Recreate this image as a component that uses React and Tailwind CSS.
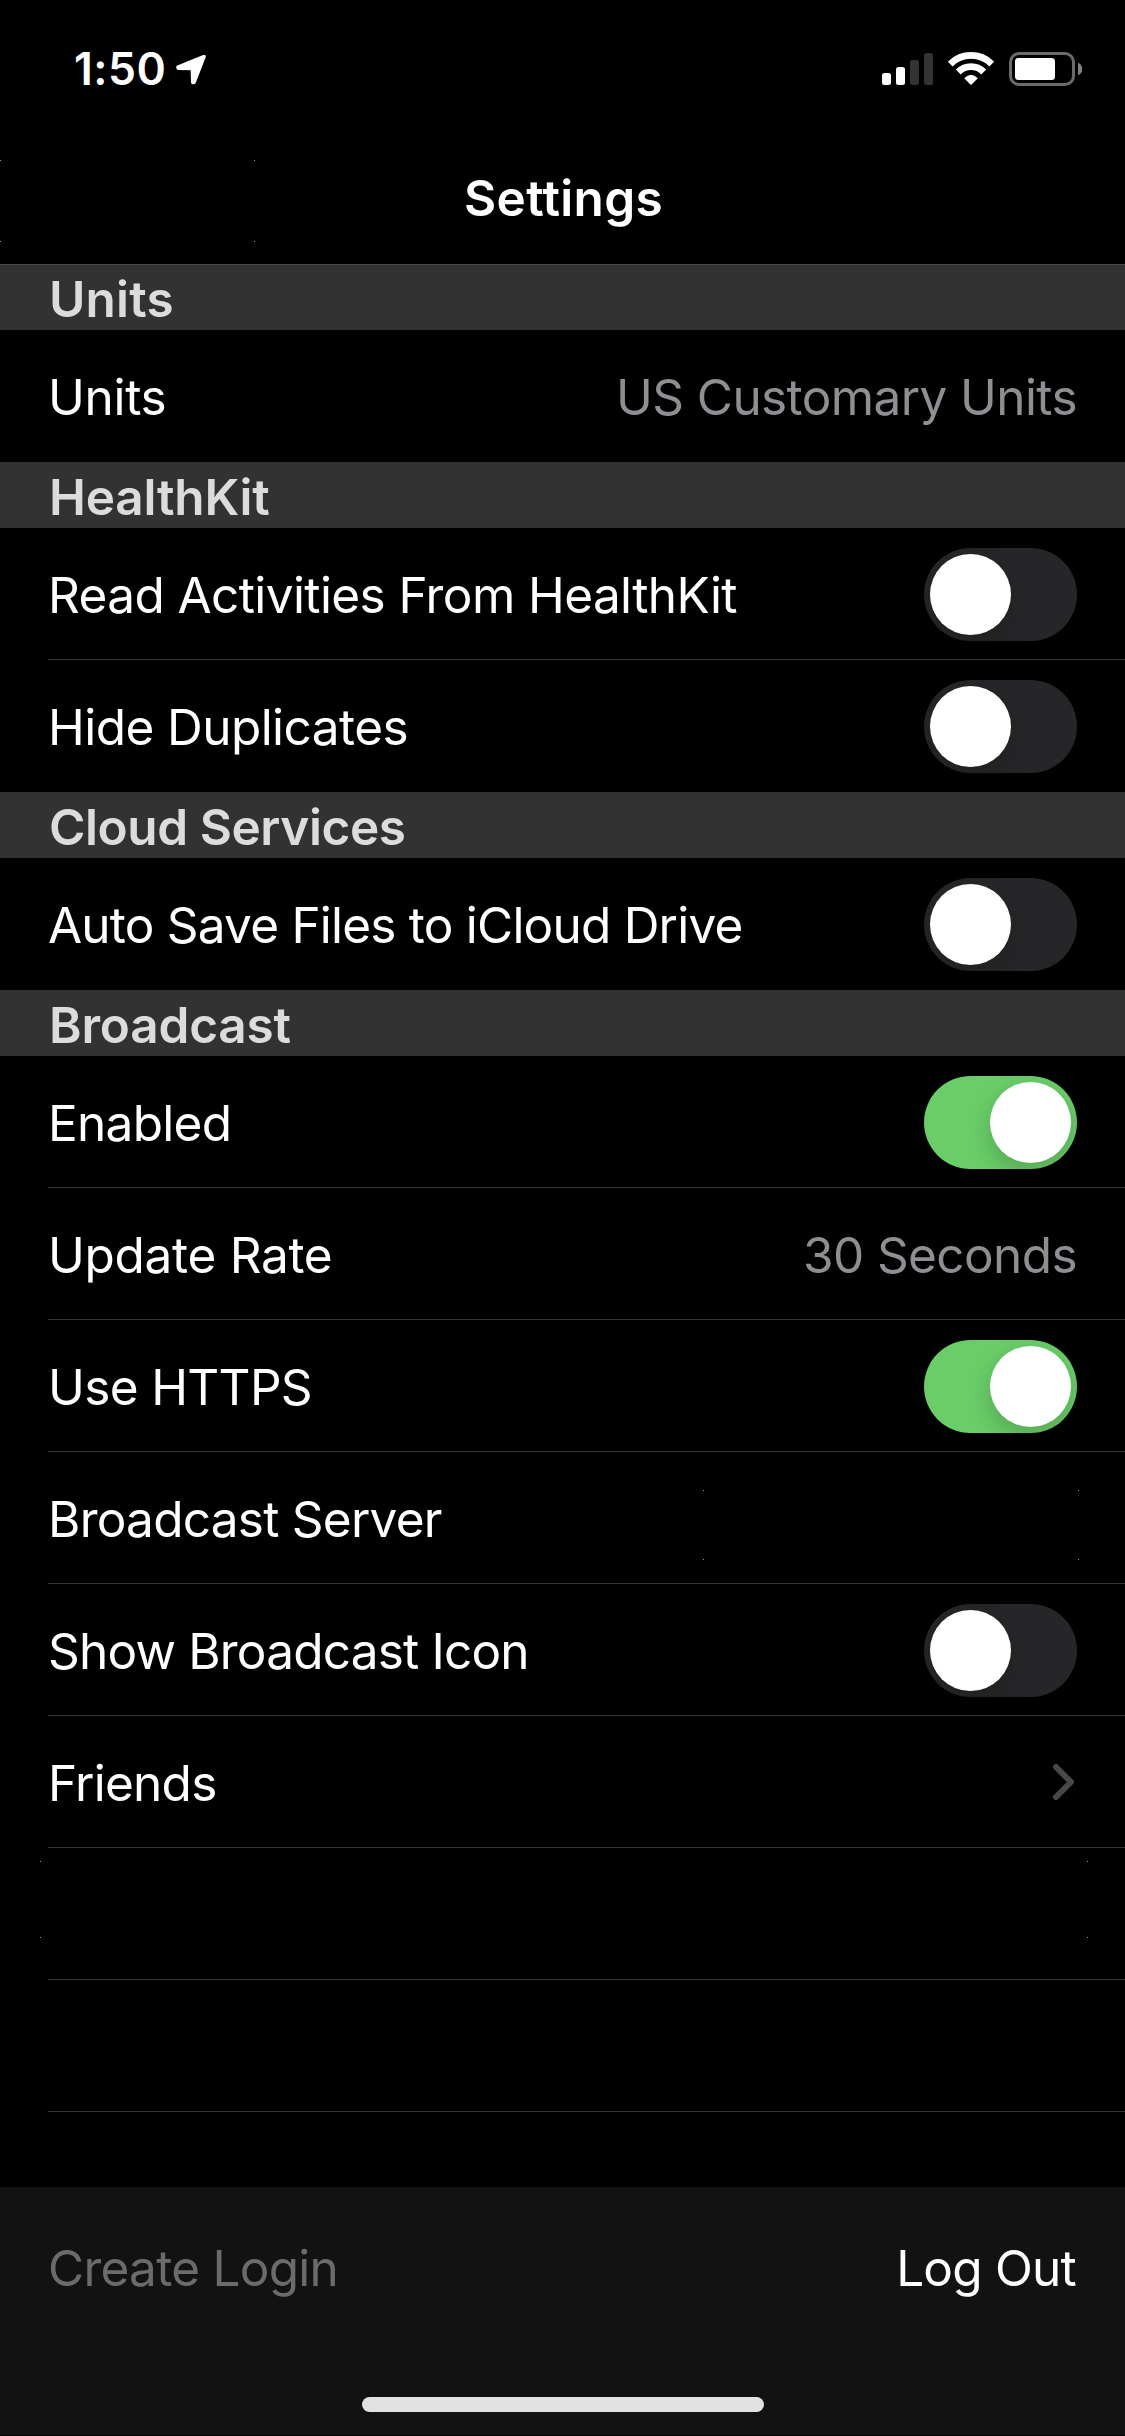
function Toggle({ on }) {
  return (
    <div
      className={
        on
          ? "flex h-[93px] w-[153px] items-center justify-end overflow-hidden rounded-full bg-[#69ce68] px-1.5"
          : "flex h-[93px] w-[153px] items-center justify-start overflow-hidden rounded-full bg-[#262628] px-1.5"
      }
    >
      <div
        className={
          on
            ? "size-[81px] rounded-full bg-white shadow-[0_9px_24px_rgba(0,0,0,0.2)]"
            : "size-[81px] rounded-full bg-white shadow-[0_9px_24px_rgba(0,0,0,0.15)]"
        }
      />
    </div>
  );
}

function Chevron() {
  return (
    <svg className="mr-[3px] mb-[2px] h-9 w-[21px]" viewBox="0 0 21 36" fill="none">
      <path d="M3 3L18 18L3 33" stroke="#48484a" strokeWidth="6" strokeLinecap="round" strokeLinejoin="round" />
    </svg>
  );
}

// Faint single-pixel marks at the four corners of a region.
function CornerMarks({ className }) {
  return (
    <div className={"pointer-events-none absolute flex flex-col justify-between " + className}>
      <div className="flex justify-between">
        <i className="size-px bg-[#9a9a9a]" />
        <i className="size-px bg-[#9a9a9a]" />
      </div>
      <div className="flex justify-between">
        <i className="size-px bg-[#9a9a9a]" />
        <i className="size-px bg-[#9a9a9a]" />
      </div>
    </div>
  );
}

function StatusBar() {
  return (
    <div className="flex h-[132px] items-start justify-between pr-[43px] pl-[74px]">
      <div className="flex h-[139px] items-center">
        <span className="text-[44.5px] leading-none font-semibold tracking-[0.5px]">1:50</span>
        <svg className="ml-[10px] h-[30px] w-[30px]" viewBox="0 0 30 30">
          <path d="M28 1.6L2 12.2L2.2 13.2L16.4 13.4L16.8 27.4L18 27.4Z" fill="#fff" stroke="#fff" strokeWidth="3.6" strokeLinejoin="round" />
        </svg>
      </div>
      <div className="flex items-start pt-[52px]">
        <svg className="h-[34px] w-[51px]" viewBox="0 0 51 34">
          <rect x="0" y="21" width="9" height="12" rx="2.5" fill="#fff" />
          <rect x="14" y="15" width="9" height="18" rx="2.5" fill="#fff" />
          <rect x="28" y="8" width="9" height="25" rx="2.5" fill="#333" />
          <rect x="42" y="1" width="9" height="32" rx="2.5" fill="#333" />
        </svg>
        <svg className="ml-[15px] h-[33px] w-[46px]" viewBox="0 0 46 33">
          <path d="M2.2 12A29.5 29.5 0 0 1 43.8 12" fill="none" stroke="#fff" strokeWidth="6.8" />
          <path d="M10.3 20A17.9 17.9 0 0 1 35.7 20" fill="none" stroke="#fff" strokeWidth="6.8" />
          <path d="M16.2 26.2Q23 19.2 29.8 26.2L23.6 32.5Q23 33 22.4 32.5Z" fill="#fff" />
        </svg>
        <svg className="ml-[15px] h-[34px] w-[73px]" viewBox="0 0 73 34">
          <rect x="1.5" y="1.5" width="63" height="31" rx="8.5" fill="none" stroke="#6b6b6b" strokeWidth="3" />
          <rect x="6" y="6" width="40" height="22" rx="3.5" fill="#fff" />
          <path d="M69 10.8A6.6 6.6 0 0 1 69 23.2Z" fill="#808080" />
        </svg>
      </div>
    </div>
  );
}

const sections = [
  {
    title: "Units",
    spacing: "tracking-[0.2px]",
    rows: [{ label: "Units", spacing: "tracking-[-0.3px]", value: "US Customary Units", valueSpacing: "tracking-[-0.6px]" }],
  },
  {
    title: "HealthKit",
    spacing: "tracking-[-0.2px]",
    rows: [
      { label: "Read Activities From HealthKit", spacing: "tracking-[-0.6px]", on: false },
      { label: "Hide Duplicates", spacing: "tracking-[-0.56px]", on: false },
    ],
  },
  {
    title: "Cloud Services",
    spacing: "tracking-[-0.42px]",
    rows: [{ label: "Auto Save Files to iCloud Drive", spacing: "tracking-[-0.78px]", on: false }],
  },
  {
    title: "Broadcast",
    spacing: "tracking-[-0.19px]",
    open: true,
    rows: [
      { label: "Enabled", spacing: "tracking-[-0.7px]", on: true },
      { label: "Update Rate", spacing: "tracking-[-0.3px]", value: "30 Seconds", valueSpacing: "tracking-[-0.6px]" },
      { label: "Use HTTPS", spacing: "tracking-[-0.65px]", on: true },
      { label: "Broadcast Server", spacing: "tracking-[-0.75px]", marks: "top-[38px] left-[703px] h-[70px] w-[376px]" },
      { label: "Show Broadcast Icon", spacing: "tracking-[-0.8px]", on: false },
      { label: "Friends", spacing: "tracking-[-0.73px]", link: true },
      { marks: "top-[13px] left-[40px] h-[77px] w-[1048px]" },
      {},
    ],
  },
];

function Row({ row, line }) {
  return (
    <div className="relative h-[132px] pl-12">
      <div
        className={
          line
            ? "flex h-full items-center justify-between border-b border-[#353537] pt-[2px] pr-12"
            : "flex h-full items-center justify-between border-b border-transparent pt-[2px] pr-12"
        }
      >
        <span className={"whitespace-nowrap " + (row.spacing || "")}>{row.label}</span>
        {row.value && <span className={"whitespace-nowrap text-[#8e8e93] " + row.valueSpacing}>{row.value}</span>}
        {row.on !== undefined && <Toggle on={row.on} />}
        {row.link && <Chevron />}
      </div>
      {row.marks && <CornerMarks className={row.marks} />}
    </div>
  );
}

export default function App() {
  return (
    <div className="flex h-[2436px] w-[1125px] flex-col overflow-hidden bg-black font-['Inter',sans-serif] text-[49.5px] leading-[60px] text-white">
      <StatusBar />
      <header className="relative flex h-[132px] items-center justify-center">
        <h1 className="pl-[2px] font-semibold tracking-[0.35px]">Settings</h1>
        <CornerMarks className="top-[28px] left-0 h-[82px] w-[255px]" />
      </header>
      <main className="flex-1">
        {sections.map((section, s) => (
          <section key={section.title}>
            <div
              className={
                s === 0
                  ? "flex h-[66px] items-center border-t border-[#4b4b4b] bg-[#323232] pt-[3px] pl-[49px]"
                  : "flex h-[66px] items-center bg-[#323232] pt-1 pl-[49px]"
              }
            >
              <h2 className={"font-semibold text-[#dcdcdc] " + section.spacing}>{section.title}</h2>
            </div>
            {section.rows.map((row, i) => (
              <Row key={i} row={row} line={section.open || i < section.rows.length - 1} />
            ))}
          </section>
        ))}
      </main>
      <footer className="flex h-[249px] flex-col items-center justify-between border-b border-[#050205] bg-[#121212] pb-[23px]">
        <div className="flex h-[162px] w-full items-center justify-between pr-[49px] pl-12">
          <span className="tracking-[-0.73px] text-[#6b6b6b]">Create Login</span>
          <span className="tracking-[-0.77px]">Log Out</span>
        </div>
        <div className="h-[15px] w-[402px] rounded-full bg-[#e3e2e3]" />
      </footer>
    </div>
  );
}
